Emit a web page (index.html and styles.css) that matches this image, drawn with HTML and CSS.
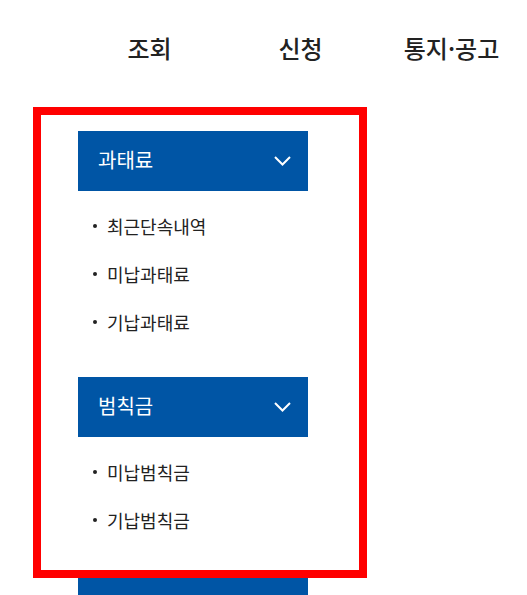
FILE: index.html
```html
<!DOCTYPE html>
<html lang="ko">
<head>
<meta charset="utf-8">
<link rel="stylesheet" href="styles.css">
</head>
<body>
<nav class="gnb">
  <a class="gnb-item">조회</a>
  <a class="gnb-item">신청</a>
  <a class="gnb-item">통지·공고</a>
</nav>
<div class="menu">
  <section class="group">
    <div class="group-head">
      <span>과태료</span>
      <svg class="chev" width="17" height="10" viewBox="0 0 17 10"><path d="M1 1 L8.5 8.5 L16 1" fill="none" stroke="#fff" stroke-width="2"/></svg>
    </div>
    <ul class="sub">
      <li>최근단속내역</li>
      <li>미납과태료</li>
      <li>기납과태료</li>
    </ul>
  </section>
  <section class="group">
    <div class="group-head">
      <span>범칙금</span>
      <svg class="chev" width="17" height="10" viewBox="0 0 17 10"><path d="M1 1 L8.5 8.5 L16 1" fill="none" stroke="#fff" stroke-width="2"/></svg>
    </div>
    <ul class="sub">
      <li>미납범칙금</li>
      <li>기납범칙금</li>
    </ul>
  </section>
  <section class="group">
    <div class="group-head"></div>
  </section>
</div>
<div class="highlight"></div>
</body>
</html>
```

FILE: styles.css
```css
html, body {
  margin: 0;
  padding: 0;
  background: #fff;
  height: 595px;
  overflow: hidden;
}
body {
  font-family: "Noto Sans CJK KR", "Noto Sans", sans-serif;
  color: #222;
  position: relative;
}
.gnb {
  display: grid;
  grid-template-columns: 151px 151px 151px;
  padding: 32px 0 0 74px;
  height: 99px;
  box-sizing: border-box;
}
.gnb-item {
  text-align: center;
  font-size: 24px;
  font-weight: 500;
  line-height: 32px;
  color: #222;
  white-space: nowrap;
}
.menu {
  margin-left: 78px;
  width: 230px;
  padding-top: 32px;
}
.group-head {
  height: 60px;
  background: #0055a5;
  color: #fff;
  display: flex;
  align-items: center;
  justify-content: space-between;
  padding: 0 17px 0 20px;
  font-size: 20px;
  line-height: 1;
}
.group-head span {
  padding-bottom: 2px;
}
.chev {
  display: block;
}
.sub {
  list-style: none;
  margin: 0;
  padding: 11px 0 31px 15px;
}
.sub li {
  height: 48px;
  display: flex;
  align-items: center;
  font-size: 18px;
  color: #222;
}
.sub li::before {
  content: "";
  width: 4px;
  height: 4px;
  border-radius: 50%;
  background: #222;
  margin-right: 10px;
}
.highlight {
  position: absolute;
  left: 33px;
  top: 107px;
  width: 334px;
  height: 471px;
  box-sizing: border-box;
  border: 8px solid #ff0000;
}
```
